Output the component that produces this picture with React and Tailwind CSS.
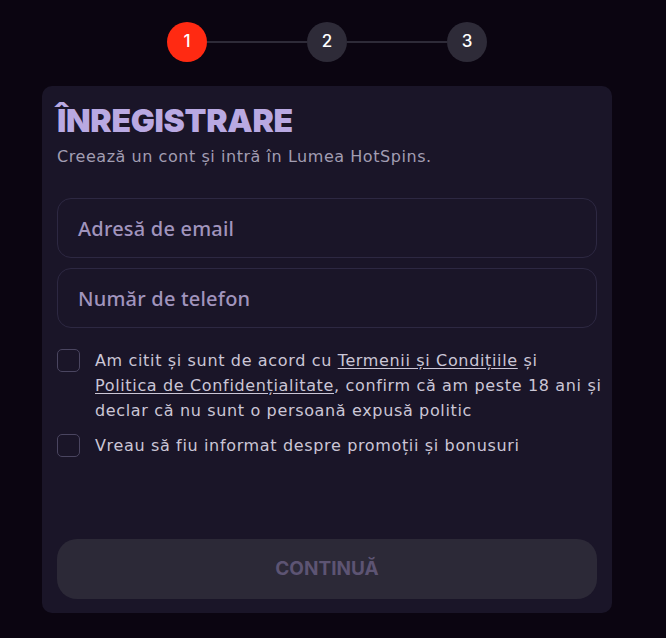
import React from 'react';

const steps = [1, 2, 3];

const Checkbox = () => (
  <span className="mt-[1px] h-[23px] w-[23px] shrink-0 rounded-[5px] border border-[#4a4560]" />
);

const App = () => {
  return (
    <div className="min-h-[638px] w-full bg-[#0b0511] font-['Inter',sans-serif]">
      <div className="w-[654px] pt-[22px]">
        {/* Stepper */}
        <div className="flex items-center justify-center">
          {steps.map((n, i) => (
            <React.Fragment key={n}>
              {i > 0 && <div className="h-[2px] w-[100px] bg-[#2e2b38]" />}
              <div
                className={`flex h-[40px] w-[40px] items-center justify-center rounded-full text-[17px] font-medium text-white ${
                  n === 1 ? 'bg-[#ff2a12]' : 'bg-[#2e2b38]'
                }`}
              >
                {n}
              </div>
            </React.Fragment>
          ))}
        </div>

        {/* Card */}
        <div className="mx-auto mt-[24px] flex h-[527px] w-[570px] flex-col rounded-[10px] bg-[#1a1528] px-[15px] pb-[14px] pt-[15px]">
          <h1 className="text-[32px] font-black leading-[40px] tracking-[-0.3px] text-[#b9a9e2]">ÎNREGISTRARE</h1>
          <p className="mt-[5px] font-['DejaVu_Sans',sans-serif] text-[16px] leading-[22px] tracking-[0.55px] text-[#a29db2]">
            Creează un cont și intră în Lumea HotSpins.
          </p>

          <div className="mt-[30px] flex flex-col gap-[10px]">
            {['Adresă de email', 'Număr de telefon'].map((ph) => (
              <div
                key={ph}
                className="flex h-[60px] items-center rounded-[14px] border border-[#2d2842] px-[20px] pt-[2px] font-['Noto_Sans',sans-serif] text-[20px] font-medium tracking-[0.2px] text-[#a194bd]"
              >
                {ph}
              </div>
            ))}
          </div>

          <div className="mt-[20px] flex gap-[15px] font-['DejaVu_Sans',sans-serif] text-[16px] leading-[25px] tracking-[0.65px] text-[#cbc6d6]">
            <Checkbox />
            <p className="mr-[-12px]">
              Am citit și sunt de acord cu <span className="underline underline-offset-2">Termenii și Condițiile</span> și
              <br />
              <span className="underline underline-offset-2">Politica de Confidențialitate</span>, confirm că am peste 18 ani și
              <br />
              declar că nu sunt o persoană expusă politic
            </p>
          </div>
          <div className="mt-[10px] flex gap-[15px] font-['DejaVu_Sans',sans-serif] text-[16px] leading-[25px] tracking-[0.65px] text-[#cbc6d6]">
            <Checkbox />
            <p>Vreau să fiu informat despre promoții și bonusuri</p>
          </div>

          <button className="mt-auto flex h-[60px] w-full items-center justify-center rounded-[20px] bg-[#2c2937] text-[19px] font-bold text-[#5d5473]">
            CONTINUĂ
          </button>
        </div>
      </div>
    </div>
  );
};

export default App;
